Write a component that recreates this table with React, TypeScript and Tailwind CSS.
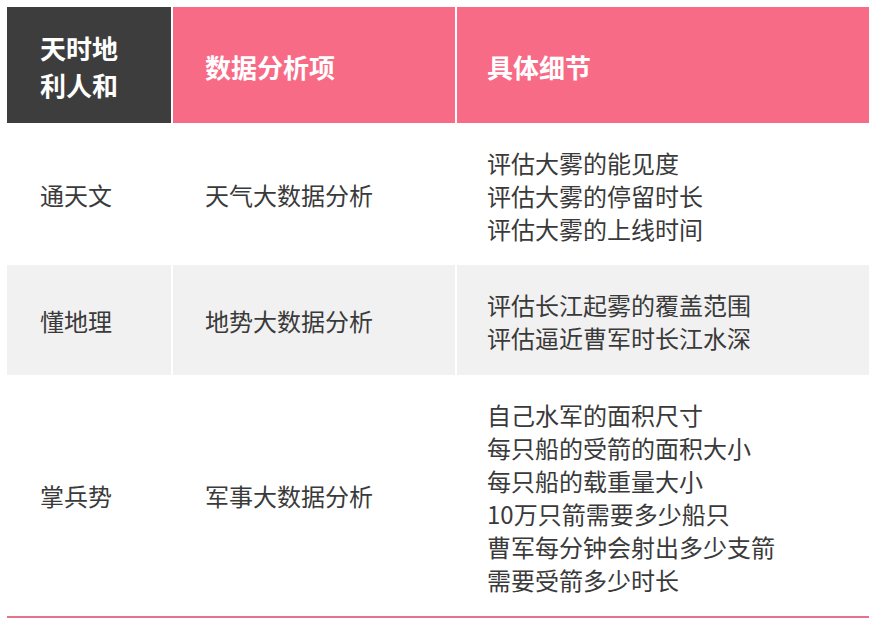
import React from "react";

const rows = [
  { a: "通天文", b: "天气大数据分析", c: ["评估大雾的能见度", "评估大雾的停留时长", "评估大雾的上线时间"], h: "h-[142px]", bg: "bg-white" },
  { a: "懂地理", b: "地势大数据分析", c: ["评估长江起雾的覆盖范围", "评估逼近曹军时长江水深"], h: "h-[110px]", bg: "bg-[#f1f1f1]" },
  {
    a: "掌兵势",
    b: "军事大数据分析",
    c: ["自己水军的面积尺寸", "每只船的受箭的面积大小", "每只船的载重量大小", "10万只箭需要多少船只", "曹军每分钟会射出多少支箭", "需要受箭多少时长"],
    h: "h-[241px]",
    bg: "bg-white",
  },
];

export default function App() {
  return (
    <div
      className="w-[880px] h-[629px] bg-white pt-[7px] pl-[7px]"
      style={{ fontFamily: '"Noto Sans CJK SC", "Noto Sans", sans-serif' }}
    >
      <div className="w-[862px]">
        <div className="grid grid-cols-[164px_282px_412px] gap-x-[2px] h-[116px] text-white font-bold text-[26px]">
          <div className="bg-[#3d3d3d] flex flex-col justify-center pl-[33px] leading-[37px] pt-[2px]">
            <span>天时地</span>
            <span>利人和</span>
          </div>
          <div className="bg-[#f86b86] flex items-center pl-[32px] pt-[2px]">数据分析项</div>
          <div className="bg-[#f86b86] flex items-center pl-[30px] pt-[2px]">具体细节</div>
        </div>
        {rows.map((r, i) => (
          <div key={i} className={`grid grid-cols-[164px_282px_412px] gap-x-[2px] ${r.h} text-[24px] text-[#3a3a3a] leading-[33px]`}>
            <div className={`${r.bg} flex items-center pl-[33px]`}>{r.a}</div>
            <div className={`${r.bg} flex items-center pl-[32px]`}>{r.b}</div>
            <div className={`${r.bg} flex flex-col justify-center pl-[30px] pt-[2px]`}>
              {r.c.map((t) => (
                <span key={t}>{t}</span>
              ))}
            </div>
          </div>
        ))}
        <div className="h-[2px] bg-[#e8728c]" />
      </div>
    </div>
  );
}
